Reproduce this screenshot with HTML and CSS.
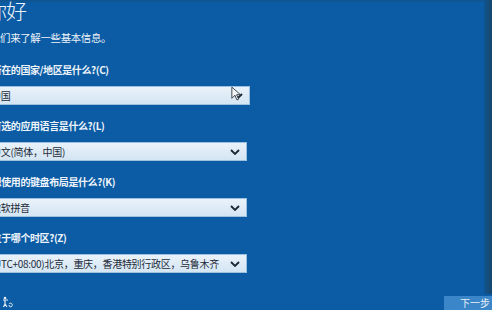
FILE: index.html
```html
<!DOCTYPE html>
<html lang="zh-CN">
<head>
<meta charset="utf-8">
<title>你好</title>
<link rel="stylesheet" href="styles.css">
</head>
<body>
<div class="screen">
  <div class="content">
    <h1 class="title">你好</h1>
    <p class="intro">我们来了解一些基本信息。</p>

    <div class="field">
      <div class="label">你所在的国家/地区是什么?(C)</div>
      <div class="select s1"><span class="value">中国</span>
        <svg class="chev" viewBox="0 0 10 6" width="10" height="6"><path d="M1 1 L5 5 L9 1" fill="none" stroke="#1b2633" stroke-width="1.8"/></svg>
      </div>
    </div>

    <div class="field">
      <div class="label">你首选的应用语言是什么?(L)</div>
      <div class="select"><span class="value">中文(简体，中国)</span>
        <svg class="chev" viewBox="0 0 10 6" width="10" height="6"><path d="M1 1 L5 5 L9 1" fill="none" stroke="#1b2633" stroke-width="1.8"/></svg>
      </div>
    </div>

    <div class="field">
      <div class="label">你想使用的键盘布局是什么?(K)</div>
      <div class="select"><span class="value">微软拼音</span>
        <svg class="chev" viewBox="0 0 10 6" width="10" height="6"><path d="M1 1 L5 5 L9 1" fill="none" stroke="#1b2633" stroke-width="1.8"/></svg>
      </div>
    </div>

    <div class="field">
      <div class="label">你位于哪个时区?(Z)</div>
      <div class="select"><span class="value">(UTC+08:00)北京，重庆，香港特别行政区，乌鲁木齐</span>
        <svg class="chev" viewBox="0 0 10 6" width="10" height="6"><path d="M1 1 L5 5 L9 1" fill="none" stroke="#1b2633" stroke-width="1.8"/></svg>
      </div>
    </div>
  </div>
  <div class="edge"></div>

  <div class="footer">
    <svg class="ease" viewBox="0 0 12 12" width="12" height="12"><circle cx="3" cy="2" r="1.3" fill="#e6eef6"/><path d="M1 4 H6 M3 4 V8 L1.5 11 M3 8 L5 11" fill="none" stroke="#e6eef6" stroke-width="1.2"/><path d="M7 8 C9 6 11 8 10 10 C9 11.5 7 11 7 9" fill="none" stroke="#e6eef6" stroke-width="1"/></svg>
    <div class="next">下一步</div>
  </div>

  <svg class="cursor" viewBox="0 0 14 18" width="12" height="16"><path d="M1 1 L1 14 L4.5 10.5 L7 16 L9 15 L6.5 9.8 L11 9.8 Z" fill="#f4f6f8" stroke="#2a2f36" stroke-width="1"/></svg>
</div>
</body>
</html>
```

FILE: styles.css
```css
html, body {
  margin: 0;
  padding: 0;
  width: 492px;
  height: 310px;
  overflow: hidden;
  background: #0b5ca5;
}

.screen {
  position: relative;
  display: grid;
  grid-template-columns: 1fr 8px;
  grid-template-rows: 1fr 16px;
  width: 492px;
  height: 310px;
  background: linear-gradient(#12528a 0, #0b5ca5 3px);
  font-family: "Noto Sans CJK SC", "Noto Sans", sans-serif;
  color: #eef4fa;
  overflow: hidden;
}

.edge {
  background: linear-gradient(90deg, #0f5590, #18466b);
}

.content {
  display: flex;
  flex-direction: column;
  margin-left: -20px;
  min-width: 0;
}

.title {
  margin: -2px 0 0 6px;
  font-size: 21px;
  font-weight: 300;
  line-height: 24px;
  letter-spacing: -1px;
}

.intro {
  margin: 9px 0 0 10px;
  font-size: 10.4px;
  line-height: 14px;
  letter-spacing: -0.3px;
}

.field {
  display: flex;
  flex-direction: column;
}

.label {
  margin-top: 14px;
  padding-left: 2px;
  font-size: 10px;
  font-weight: 700;
  line-height: 14px;
  letter-spacing: -0.4px;
}

.field:first-of-type .label {
  margin-top: 18px;
}

.select {
  margin-top: 9px;
  width: 267px;
  height: 19px;
  box-sizing: border-box;
  display: flex;
  align-items: center;
  justify-content: space-between;
  padding: 0 6px 0 10px;
  background: linear-gradient(#e9f2fa, #d4e5f3);
  border: 1px solid #9cc0df;
  color: #1d2a38;
  font-size: 10px;
  letter-spacing: -0.3px;
}

.select.s1 {
  width: 270px;
}

.chev {
  flex: none;
}

.footer {
  grid-column: 1 / 3;
  display: flex;
  align-items: flex-end;
  justify-content: space-between;
  padding-left: 2px;
}

.ease {
  margin-bottom: 2px;
}

.next {
  width: 48px;
  height: 14px;
  background: #3a86c8;
  color: #e8f1f9;
  font-size: 10px;
  line-height: 14px;
  text-align: right;
  padding-right: 2px;
  box-sizing: border-box;
  white-space: nowrap;
}

.cursor {
  position: absolute;
  left: 231px;
  top: 86px;
}
```
